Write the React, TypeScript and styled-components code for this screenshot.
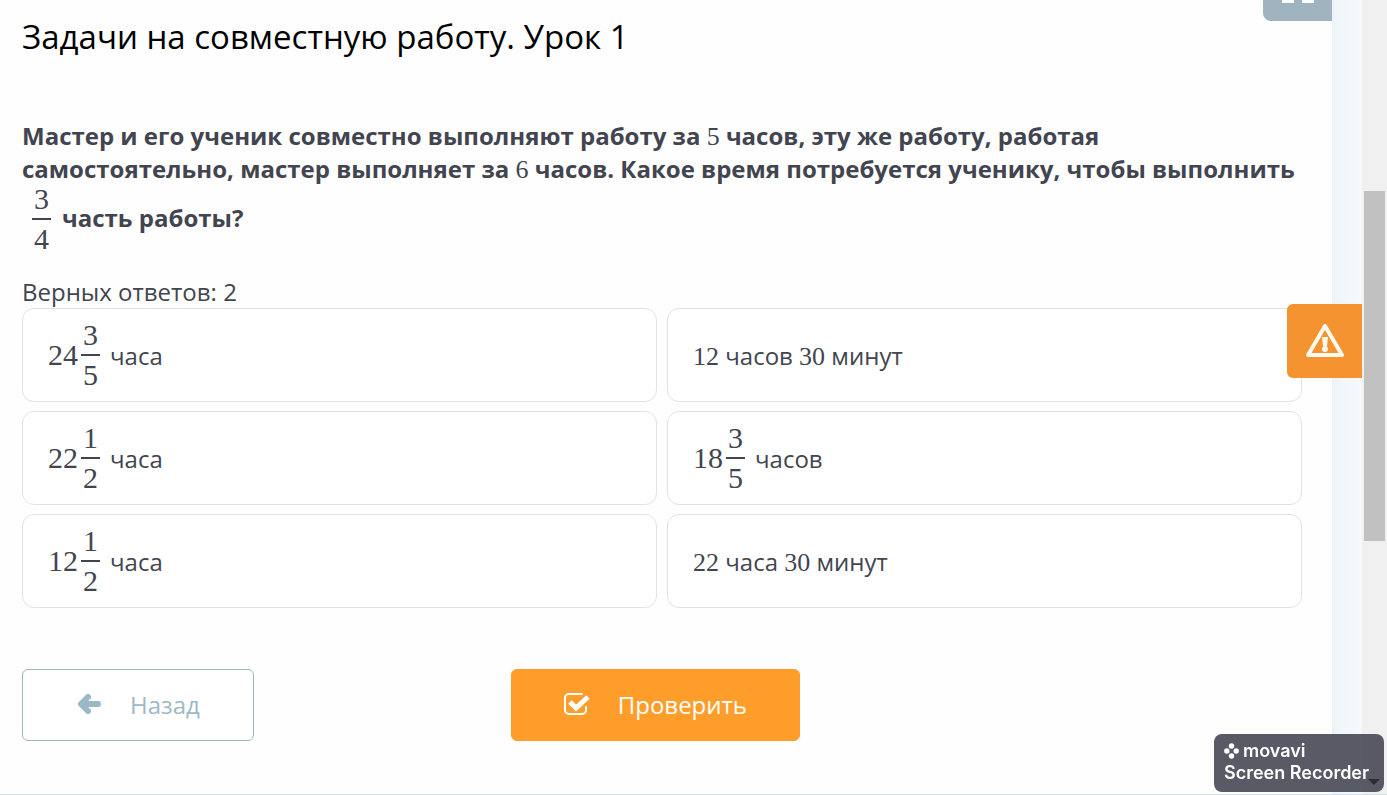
import React, { useState } from "react";
import styled, { createGlobalStyle } from "styled-components";

const GlobalStyle = createGlobalStyle`
  * { box-sizing: border-box; }
  body {
    margin: 0;
    background: #fff;
    color: #42454f;
    font-family: "Open Sans", "Noto Sans", sans-serif;
    font-size: 24px;
    line-height: 33px;
  }
  button { font: inherit; color: inherit; cursor: pointer; }
`;

const Page = styled.div`
  display: flex;
  min-height: 100vh;
  position: relative;
  overflow: hidden;
  border-bottom: 1px solid #d3dfe8;
`;

const Sheet = styled.main`
  flex: 1;
  min-width: 0;
  padding: 15px 30px 53px 22px;
  background: #fefefe;
`;

const Gutter = styled.div`
  width: 30px;
  background: linear-gradient(to right, #eef2f6, #f2f7fc 30%, #f5f9fd);
`;

const ScrollTrack = styled.div`
  width: 25px;
  padding: 191px 2px 0;
  background: #f0f0f0;
`;

const ScrollThumb = styled.div`
  height: 350px;
  background: #c1c1c1;
`;

const Title = styled.h1`
  margin: 0;
  color: #000;
  font-size: 33px;
  font-weight: 400;
  line-height: 44px;
`;

const Question = styled.p`
  margin: 60px 0 24px;
  font-weight: 700;
`;

const Hint = styled.p`
  margin: 0;
`;

const Answers = styled.div`
  display: grid;
  grid-template-columns: 1fr 1fr;
  gap: 9px 10px;
`;

const Answer = styled.button<{ $selected: boolean }>`
  display: flex;
  align-items: center;
  height: 94px;
  padding: 0 25px;
  border: 1px solid ${(p) => (p.$selected ? "#ff9d2b" : "#e1e2e4")};
  border-radius: 12px;
  background: #fff;
  text-align: left;
`;

const Num = styled.span<{ $size: number }>`
  font-family: "Liberation Serif", serif;
  font-size: ${(p) => p.$size}px;
  font-weight: 400;
  line-height: 24px;
`;

const Frac = styled.span`
  display: inline-flex;
  flex-direction: column;
  align-items: center;
  width: 19px;
  margin: 0 10px 0 3px;
  font-family: "Liberation Serif", serif;
  font-size: 30px;
  font-weight: 400;
  line-height: 32px;
`;

const QuestionFrac = styled(Frac)`
  margin: 2px 11px 0 10px;
  vertical-align: 18px;
`;

const Numerator = styled.span`
  width: 100%;
  height: 33px;
  border-bottom: 2px solid currentColor;
  line-height: 24px;
  text-align: center;
`;

const Denominator = styled.span`
  height: 31px;
  line-height: 37px;
`;

const Actions = styled.div`
  display: flex;
  gap: 257px;
  margin-top: 61px;
`;

const ActionButton = styled.button<{ $primary?: boolean }>`
  display: flex;
  align-items: center;
  gap: 28px;
  height: 72px;
  padding: 0 ${(p) => (p.$primary ? 52 : 53)}px 2px;
  border: 1px solid ${(p) => (p.$primary ? "#ff9d2b" : "#9fb5c2")};
  border-radius: 6px;
  background: ${(p) => (p.$primary ? "#ff9d2b" : "#fff")};
  color: ${(p) => (p.$primary ? "#fff" : "#9fb8c6")};
`;

const MenuTab = styled.button`
  position: absolute;
  top: 0;
  right: 55px;
  display: flex;
  justify-content: center;
  gap: 8px;
  width: 69px;
  height: 21px;
  padding: 0;
  border: 0;
  border-radius: 0 0 0 8px;
  background: #a0b4c0;
`;

const Tile = styled.span`
  width: 12px;
  height: 3px;
  background: #fff;
`;

const ReportButton = styled.button`
  position: absolute;
  top: 304px;
  right: 25px;
  display: flex;
  align-items: center;
  justify-content: center;
  width: 75px;
  height: 74px;
  padding: 0;
  border: 0;
  border-radius: 6px 0 0 6px;
  background: #f69331;
`;

const Watermark = styled.aside`
  position: fixed;
  right: 3px;
  bottom: 3px;
  width: 170px;
  height: 58px;
  padding: 6px 10px;
  border-radius: 8px;
  background: rgba(78, 78, 90, 0.93);
  color: #fff;
  font-family: Inter, sans-serif;
  font-size: 18px;
  font-weight: 600;
  line-height: 22px;
  white-space: nowrap;
`;

const Brand = styled.div`
  display: flex;
  align-items: center;
  gap: 4px;
`;

const ScrollArrow = styled.svg`
  position: absolute;
  right: 4px;
  bottom: 7px;
`;

type Option = { whole?: string; frac?: [string, string]; text?: string; parts?: [string, string][] };

const options: Option[] = [
  { whole: "24", frac: ["3", "5"], text: "часа" },
  { parts: [["12", "часов"], ["30", "минут"]] },
  { whole: "22", frac: ["1", "2"], text: "часа" },
  { whole: "18", frac: ["3", "5"], text: "часов" },
  { whole: "12", frac: ["1", "2"], text: "часа" },
  { parts: [["22", "часа"], ["30", "минут"]] },
];

function OptionContent({ option }: { option: Option }) {
  if (option.frac) {
    return (
      <>
        <Num $size={30}>{option.whole}</Num>
        <Frac>
          <Numerator>{option.frac[0]}</Numerator>
          <Denominator>{option.frac[1]}</Denominator>
        </Frac>
        <span>{option.text}</span>
      </>
    );
  }
  return (
    <span>
      {option.parts?.map(([value, unit]) => (
        <React.Fragment key={value}>
          <Num $size={26}>{value}</Num> {unit}{" "}
        </React.Fragment>
      ))}
    </span>
  );
}

export default function App() {
  const [selected, setSelected] = useState<number[]>([]);
  const toggle = (i: number) =>
    setSelected((s) => (s.includes(i) ? s.filter((x) => x !== i) : [...s, i]));

  return (
    <>
      <GlobalStyle />
      <Page>
        <Sheet>
          <Title>Задачи на совместную работу. Урок 1</Title>
          <Question>
            Мастер и его ученик совместно выполняют работу за <Num $size={26}>5</Num> часов, эту же
            работу, работая самостоятельно, мастер выполняет за <Num $size={26}>6</Num> часов. Какое
            время потребуется ученику, чтобы выполнить{" "}
            <QuestionFrac>
              <Numerator>3</Numerator>
              <Denominator>4</Denominator>
            </QuestionFrac>
            часть работы?
          </Question>
          <Hint>Верных ответов: 2</Hint>
          <Answers>
            {options.map((option, i) => (
              <Answer
                key={i}
                type="button"
                $selected={selected.includes(i)}
                aria-pressed={selected.includes(i)}
                onClick={() => toggle(i)}
              >
                <OptionContent option={option} />
              </Answer>
            ))}
          </Answers>
          <Actions>
            <ActionButton type="button">
              <svg width="26" height="24" viewBox="0 0 26 24" aria-hidden="true">
                <path d="M12 5 5 12l7 7M6 12h16" fill="none" stroke="#9bb8c7" strokeWidth="6" strokeLinecap="round" strokeLinejoin="round" />
              </svg>
              Назад
            </ActionButton>
            <ActionButton type="button" $primary>
              <svg width="26" height="24" viewBox="0 0 26 24" aria-hidden="true">
                <path d="M18 2H5a4 4 0 0 0-4 4v12a4 4 0 0 0 4 4h13a4 4 0 0 0 4-4v-3" fill="none" stroke="#fff" strokeWidth="2" strokeLinecap="round" />
                <path d="m6 10 6 6L24 5" fill="none" stroke="#fff" strokeWidth="5" />
              </svg>
              Проверить
            </ActionButton>
          </Actions>
        </Sheet>
        <Gutter />
        <ScrollTrack>
          <ScrollThumb />
        </ScrollTrack>
        <MenuTab type="button" aria-label="Меню">
          <Tile />
          <Tile />
        </MenuTab>
        <ReportButton type="button" aria-label="Сообщить об ошибке">
          <svg width="40" height="36" viewBox="0 0 40 36" aria-hidden="true">
            <path d="M20 3 3 32h34Z" fill="none" stroke="#fffaf0" strokeWidth="4" strokeLinejoin="round" />
            <path d="M17 14h6l-1 9h-4Z" fill="#fffaf0" />
            <circle cx="20" cy="26" r="3" fill="#fffaf0" />
          </svg>
        </ReportButton>
      </Page>
      <Watermark>
        <Brand>
          <svg width="15" height="16" viewBox="0 0 15 16" fill="#fff" aria-hidden="true">
            <circle cx="7.5" cy="3" r="2.7" />
            <circle cx="2.8" cy="8" r="2.7" />
            <circle cx="12.2" cy="8" r="2.7" />
            <circle cx="7.5" cy="13" r="2.7" />
          </svg>
          movavi
        </Brand>
        Screen Recorder
        <ScrollArrow width="12" height="6" viewBox="0 0 12 6" aria-hidden="true">
          <path d="M0 0h12L6 6Z" fill="#2d2d36" />
        </ScrollArrow>
      </Watermark>
    </>
  );
}
